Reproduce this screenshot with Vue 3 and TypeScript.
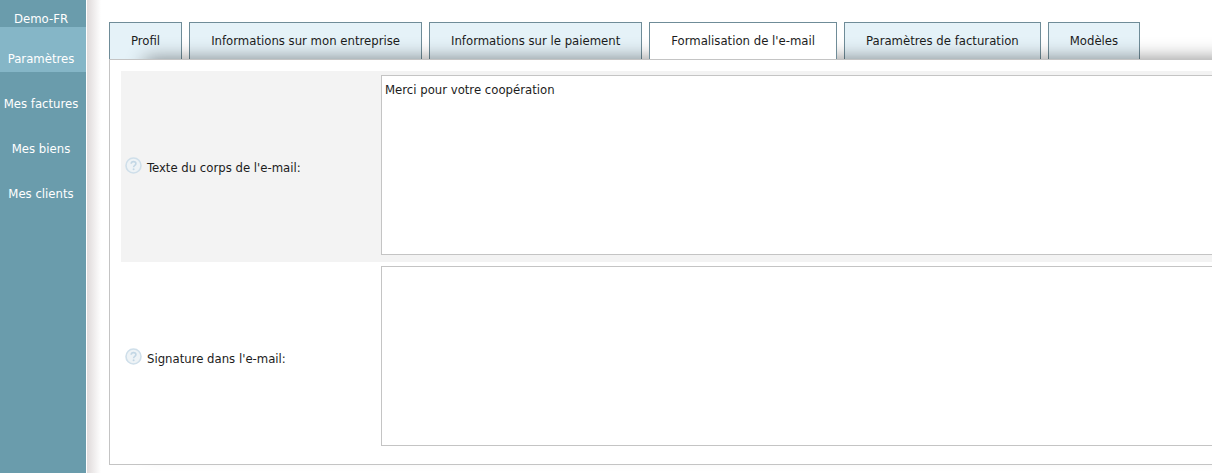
<script setup lang="ts">
import { ref } from 'vue'

interface Field {
  id: string
  label: string
  value: string
}

const menu = ['Paramètres', 'Mes factures', 'Mes biens', 'Mes clients']
const activeMenu = ref('Paramètres')

const tabs = [
  'Profil',
  'Informations sur mon entreprise',
  'Informations sur le paiement',
  "Formalisation de l'e-mail",
  'Paramètres de facturation',
  'Modèles',
]
const activeTab = ref("Formalisation de l'e-mail")

const fields = ref<Field[]>([
  { id: 'body', label: "Texte du corps de l'e-mail:", value: 'Merci pour votre coopération' },
  { id: 'signature', label: "Signature dans l'e-mail:", value: '' },
])
</script>

<template>
  <div class="app">
    <aside class="sidebar">
      <div class="account">Demo-FR</div>
      <nav>
        <a
          v-for="item in menu"
          :key="item"
          href="#"
          class="menu-item"
          :class="{ active: item === activeMenu }"
          @click.prevent="activeMenu = item"
        >{{ item }}</a>
      </nav>
    </aside>
    <main class="content">
      <div class="tabs" role="tablist">
        <button
          v-for="tab in tabs"
          :key="tab"
          type="button"
          role="tab"
          class="tab"
          :class="{ active: tab === activeTab }"
          :aria-selected="tab === activeTab"
          @click="activeTab = tab"
        >{{ tab }}</button>
      </div>
      <form class="panel" @submit.prevent>
        <div v-for="field in fields" :key="field.id" class="row">
          <div class="caption">
            <svg class="help" viewBox="0 0 17 17" aria-hidden="true">
              <circle cx="8.5" cy="8.5" r="7.5" fill="#eef3f6" stroke="#cfdfea" stroke-width="1.6" />
              <path d="M6.2 6.8C6.2 3.9 10.9 4 10.9 6.7C10.9 8.4 8.6 8.5 8.6 10.2" fill="none" stroke="#c3d7e5" stroke-width="1.6" />
              <circle cx="8.6" cy="12.3" r="1" fill="#c3d7e5" />
            </svg>
            <label :for="field.id">{{ field.label }}</label>
          </div>
          <textarea :id="field.id" v-model="field.value"></textarea>
        </div>
      </form>
    </main>
  </div>
</template>

<style>
body {
  margin: 0;
  background: #fff;
}
</style>

<style scoped>
.app {
  display: flex;
  min-height: 100vh;
  font: 13px/20px "DejaVu Sans Condensed", Tahoma, "Noto Sans", sans-serif;
  color: #1c1c1c;
}
.sidebar {
  flex: none;
  box-sizing: border-box;
  width: 86px;
  background: #6a9cac;
  color: #fff;
  text-align: center;
  white-space: nowrap;
}
.account {
  height: 18px;
  padding: 9px 4px 0 0;
}
.menu-item {
  display: block;
  padding: 22px 4px 3px 0;
  color: #fff;
  text-decoration: none;
}
.menu-item.active {
  background: #85b6c7;
}
.content {
  flex: 1;
  min-width: 0;
  overflow: hidden;
  margin-left: 1px;
  padding: 22px 0 8px 22px;
  background: linear-gradient(to right, #dfdada, #fff 14px);
}
.tabs {
  display: flex;
  gap: 7px;
}
.tab {
  flex: none;
  height: 37px;
  padding: 0 21px;
  border: 1px solid #6f8c98;
  border-bottom: 0;
  background: #e5f2f8;
  color: inherit;
  font: inherit;
  white-space: nowrap;
  cursor: pointer;
}
.tab.active {
  position: relative;
  z-index: 1;
  background: #fff;
}
.panel {
  position: relative;
  padding: 11px 0 11px 11px;
  border: 1px solid #c4c4c4;
  border-right: 0;
  background: #fff;
  box-shadow: 28px -8px 18px -8px rgba(0, 0, 0, 0.46);
}
.row {
  display: grid;
  grid-template-columns: 260px 1fr;
  padding: 4px 0 7px;
}
.row:nth-child(odd) {
  background: #f3f3f3;
}
.caption {
  display: flex;
  align-items: center;
  gap: 5px;
  padding: 6px 0 0 4px;
}
.help {
  flex: none;
  width: 17px;
  height: 17px;
  margin-bottom: 6px;
}
textarea {
  display: block;
  box-sizing: border-box;
  width: 100%;
  height: 180px;
  padding: 4px 3px;
  border: 1px solid #c4c4c4;
  border-right: 0;
  border-radius: 0;
  outline: 0;
  background: #fff;
  color: inherit;
  font: inherit;
  resize: none;
}
</style>
